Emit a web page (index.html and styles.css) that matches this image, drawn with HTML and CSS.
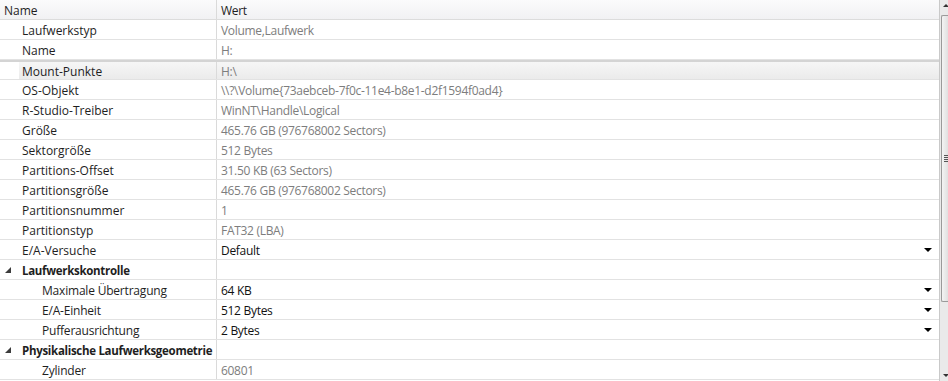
FILE: index.html
```html
<!DOCTYPE html>
<html lang="de">
<head>
  <meta charset="UTF-8" />
  <title>Eigenschaften</title>
  <link rel="stylesheet" href="styles.css">
</head>
<body>
  <div class="panel">
    <div class="tree">
      <div class="row head">
        <div class="name">Name</div>
        <div class="value">Wert</div>
      </div>
      <div class="row"><div class="name l1">Laufwerkstyp</div><div class="value ro">Volume,Laufwerk</div></div>
      <div class="row"><div class="name l1">Name</div><div class="value ro">H:</div></div>
      <div class="row sel"><div class="name l1">Mount-Punkte</div><div class="value ro">H:\</div></div>
      <div class="row"><div class="name l1">OS-Objekt</div><div class="value ro">\\?\Volume{73aebceb-7f0c-11e4-b8e1-d2f1594f0ad4}</div></div>
      <div class="row"><div class="name l1">R-Studio-Treiber</div><div class="value ro">WinNT\Handle\Logical</div></div>
      <div class="row"><div class="name l1">Größe</div><div class="value ro">465.76 GB (976768002 Sectors)</div></div>
      <div class="row"><div class="name l1">Sektorgröße</div><div class="value ro">512 Bytes</div></div>
      <div class="row"><div class="name l1">Partitions-Offset</div><div class="value ro">31.50 KB (63 Sectors)</div></div>
      <div class="row"><div class="name l1">Partitionsgröße</div><div class="value ro">465.76 GB (976768002 Sectors)</div></div>
      <div class="row"><div class="name l1">Partitionsnummer</div><div class="value ro">1</div></div>
      <div class="row"><div class="name l1">Partitionstyp</div><div class="value ro">FAT32 (LBA)</div></div>
      <div class="row"><div class="name l1">E/A-Versuche</div><div class="value combo">Default<span class="drop"></span></div></div>
      <div class="row group">
        <div class="name"><span class="twist"><svg width="6" height="6" viewBox="0 0 6 6"><polygon points="6,0 6,6 0,6" fill="#3c3c3c"/></svg></span>Laufwerkskontrolle</div>
        <div class="value"></div>
      </div>
      <div class="row"><div class="name l2">Maximale Übertragung</div><div class="value combo">64 KB<span class="drop"></span></div></div>
      <div class="row"><div class="name l2">E/A-Einheit</div><div class="value combo">512 Bytes<span class="drop"></span></div></div>
      <div class="row"><div class="name l2">Pufferausrichtung</div><div class="value combo">2 Bytes<span class="drop"></span></div></div>
      <div class="row group">
        <div class="name"><span class="twist"><svg width="6" height="6" viewBox="0 0 6 6"><polygon points="6,0 6,6 0,6" fill="#3c3c3c"/></svg></span>Physikalische Laufwerksgeometrie</div>
        <div class="value"></div>
      </div>
      <div class="row"><div class="name l2">Zylinder</div><div class="value ro">60801</div></div>
    </div>
    <div class="scrollbar">
      <div class="arrow up"></div>
      <div class="track"><div class="thumb"><span class="grip"></span></div></div>
      <div class="arrow down"></div>
    </div>
  </div>
</body>
</html>
```

FILE: styles.css
```css
body {
  margin: 0;
  background: #fff;
  font-family: 'Segoe UI', 'Open Sans', sans-serif;
  font-size: 12px;
  color: #1e1e1e;
}
.panel {
  display: flex;
  height: 381px;
  overflow: hidden;
}
.tree {
  flex: 1;
}
.row {
  display: flex;
  height: 18px;
  padding-top: 1px;
  line-height: 19px;
  border-bottom: 1px solid #e2e2e2;
  white-space: nowrap;
}
.name {
  width: 216px;
  flex-shrink: 0;
  overflow: hidden;
  box-sizing: border-box;
}
.value {
  flex: 1;
  position: relative;
  padding-left: 4px;
  margin-top: -1px;
  padding-top: 1px;
  border-left: 1px solid #dadada;
  letter-spacing: -0.3px;
}
.l1 { padding-left: 22px; }
.l2 { padding-left: 42px; letter-spacing: -0.2px; }
.head {
  background: linear-gradient(#fbfbfc, #f1f1f3);
  border-bottom-color: #dcdcdc;
}
.head .name { padding-left: 4px; }
.ro { color: #7d7d7d; }
.combo { color: #111; }
.drop {
  position: absolute;
  right: 7px;
  top: 8px;
  border-left: 4px solid transparent;
  border-right: 4px solid transparent;
  border-top: 4px solid #000;
}
.group { font-weight: bold; }
.group .name {
  display: flex;
  align-items: center;
  font-size: 11.5px;
  letter-spacing: -0.3px;
}
.twist {
  width: 22px;
  flex-shrink: 0;
  padding-left: 5px;
  box-sizing: border-box;
  display: flex;
  align-items: center;
}
.sel {
  background: linear-gradient(to right, #fff 19px, transparent 19px),
              linear-gradient(#f6f6f6, #ebebeb);
  border-top: 2px solid #d4d4d4;
  height: 16px;
  line-height: 17px;
}
.scrollbar {
  width: 8px;
  border-left: 1px solid #c9c9c9;
  background: #eaeaea;
  display: flex;
  flex-direction: column;
}
.arrow {
  height: 14px;
  position: relative;
}
.arrow::after {
  content: "";
  position: absolute;
  left: 3px;
  border-left: 3px solid transparent;
  border-right: 3px solid transparent;
}
.up::after { top: 4px; border-bottom: 3px solid #333; }
.down::after { top: 7px; border-top: 3px solid #333; }
.track {
  flex: 1;
  padding: 1px 0;
}
.thumb {
  height: 285px;
  margin-left: 1px;
  background: linear-gradient(to right, #f4f4f4, #e0e0e0);
  border: 1px solid #9a9a9a;
  border-right: none;
  border-radius: 2px 0 0 2px;
  display: flex;
  align-items: center;
  justify-content: center;
}
.grip {
  width: 6px;
  height: 7px;
  margin-left: 2px;
  background: repeating-linear-gradient(#555 0 1px, transparent 1px 2px);
}
```
